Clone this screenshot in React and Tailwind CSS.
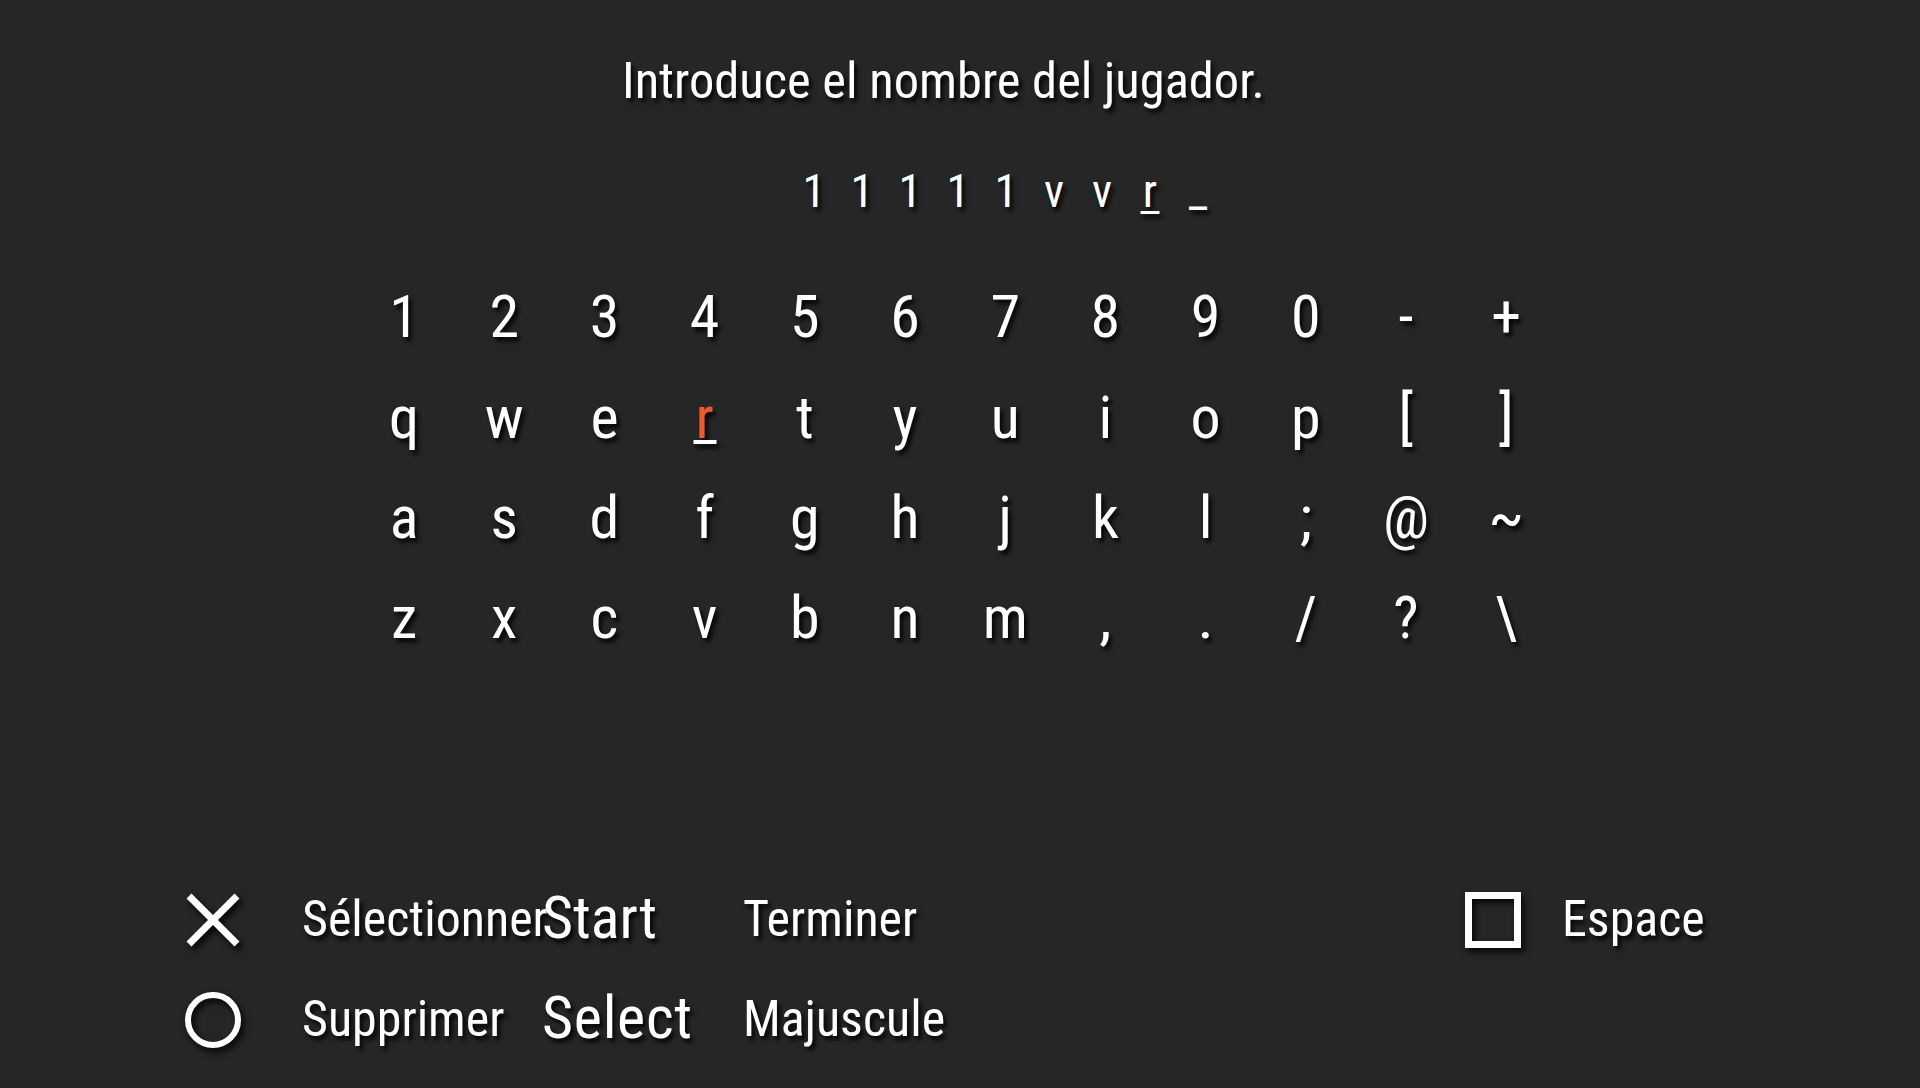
import React from 'react';

const typed = ['1', '1', '1', '1', '1', 'v', 'v', 'r', '_'];

const keys = [
  ['1', '2', '3', '4', '5', '6', '7', '8', '9', '0', '-', '+'],
  ['q', 'w', 'e', 'r', 't', 'y', 'u', 'i', 'o', 'p', '[', ']'],
  ['a', 's', 'd', 'f', 'g', 'h', 'j', 'k', 'l', ';', '@', '~'],
  ['z', 'x', 'c', 'v', 'b', 'n', 'm', ',', '.', '/', '?', '\\'],
];

const shadow = { filter: 'drop-shadow(3px 4px 3px rgba(0,0,0,0.9))' };

const Cross = () => (
  <svg width="56" height="56" viewBox="0 0 56 56" style={shadow}>
    <path d="M4 4 L52 52 M52 4 L4 52" stroke="#fff" strokeWidth="7" fill="none" />
  </svg>
);

const Circle = () => (
  <svg width="56" height="56" viewBox="0 0 56 56" style={shadow}>
    <circle cx="28" cy="28" r="25" stroke="#fff" strokeWidth="6" fill="none" />
  </svg>
);

const Square = () => (
  <svg width="56" height="56" viewBox="0 0 56 56" style={shadow}>
    <rect x="3.5" y="3.5" width="49" height="49" stroke="#fff" strokeWidth="7" fill="none" />
  </svg>
);

// cursor bar under the current letter, wider than the glyph
const Cursor = ({ className }) => (
  <span className={`absolute left-1/2 -translate-x-1/2 bg-white shadow-[3px_4px_4px_rgba(0,0,0,0.9)] ${className}`} />
);

export default function App() {
  return (
    <div className="w-[1920px] h-[1088px] overflow-hidden bg-[#262626] text-white font-['Roboto',sans-serif] [font-stretch:75%] [text-shadow:3px_4px_4px_rgba(0,0,0,0.9)]">
      <h1 className="pt-[51px] pl-[622px] text-[50.5px] leading-[60px] font-normal whitespace-nowrap">Introduce el nombre del jugador.</h1>

      <div className="flex pl-[790px] mt-[50px] h-[60px] items-center text-[47px]">
        {typed.map((c, i) => (
          <span key={i} className="relative w-[48px] text-center">
            {c}
            {i === 7 && <Cursor className="bottom-[12px] w-[19px] h-[3px]" />}
          </span>
        ))}
      </div>

      <div className="pl-[354px] mt-[46px]">
        {keys.map((row, r) => (
          <div key={r} className="flex h-[100.4px] items-center text-[60px]">
            {row.map((k) => (
              <span key={k} className={`relative w-[100.2px] text-center ${k === 'r' ? 'text-[#ef5a2c]' : ''}`}>
                {k}
                {k === 'r' && <Cursor className="bottom-[19px] w-[23px] h-[4px]" />}
              </span>
            ))}
          </div>
        ))}
      </div>

      <div className="mt-[201px] flex pl-[185px] text-[50px] h-[100px] items-center">
        <Cross />
        <span className="ml-[61px] w-[240px] whitespace-nowrap">Sélectionner</span>
        <span className="w-[201px] text-[60px] -mt-[4px]">Start</span>
        <span className="w-[722px]">Terminer</span>
        <Square />
        <span className="ml-[41px]">Espace</span>
      </div>
      <div className="flex pl-[185px] text-[50px] h-[100px] items-center">
        <Circle />
        <span className="ml-[61px] w-[240px] whitespace-nowrap">Supprimer</span>
        <span className="w-[201px] text-[60px] tracking-[0.7px] -mt-[4px]">Select</span>
        <span>Majuscule</span>
      </div>
    </div>
  );
}
